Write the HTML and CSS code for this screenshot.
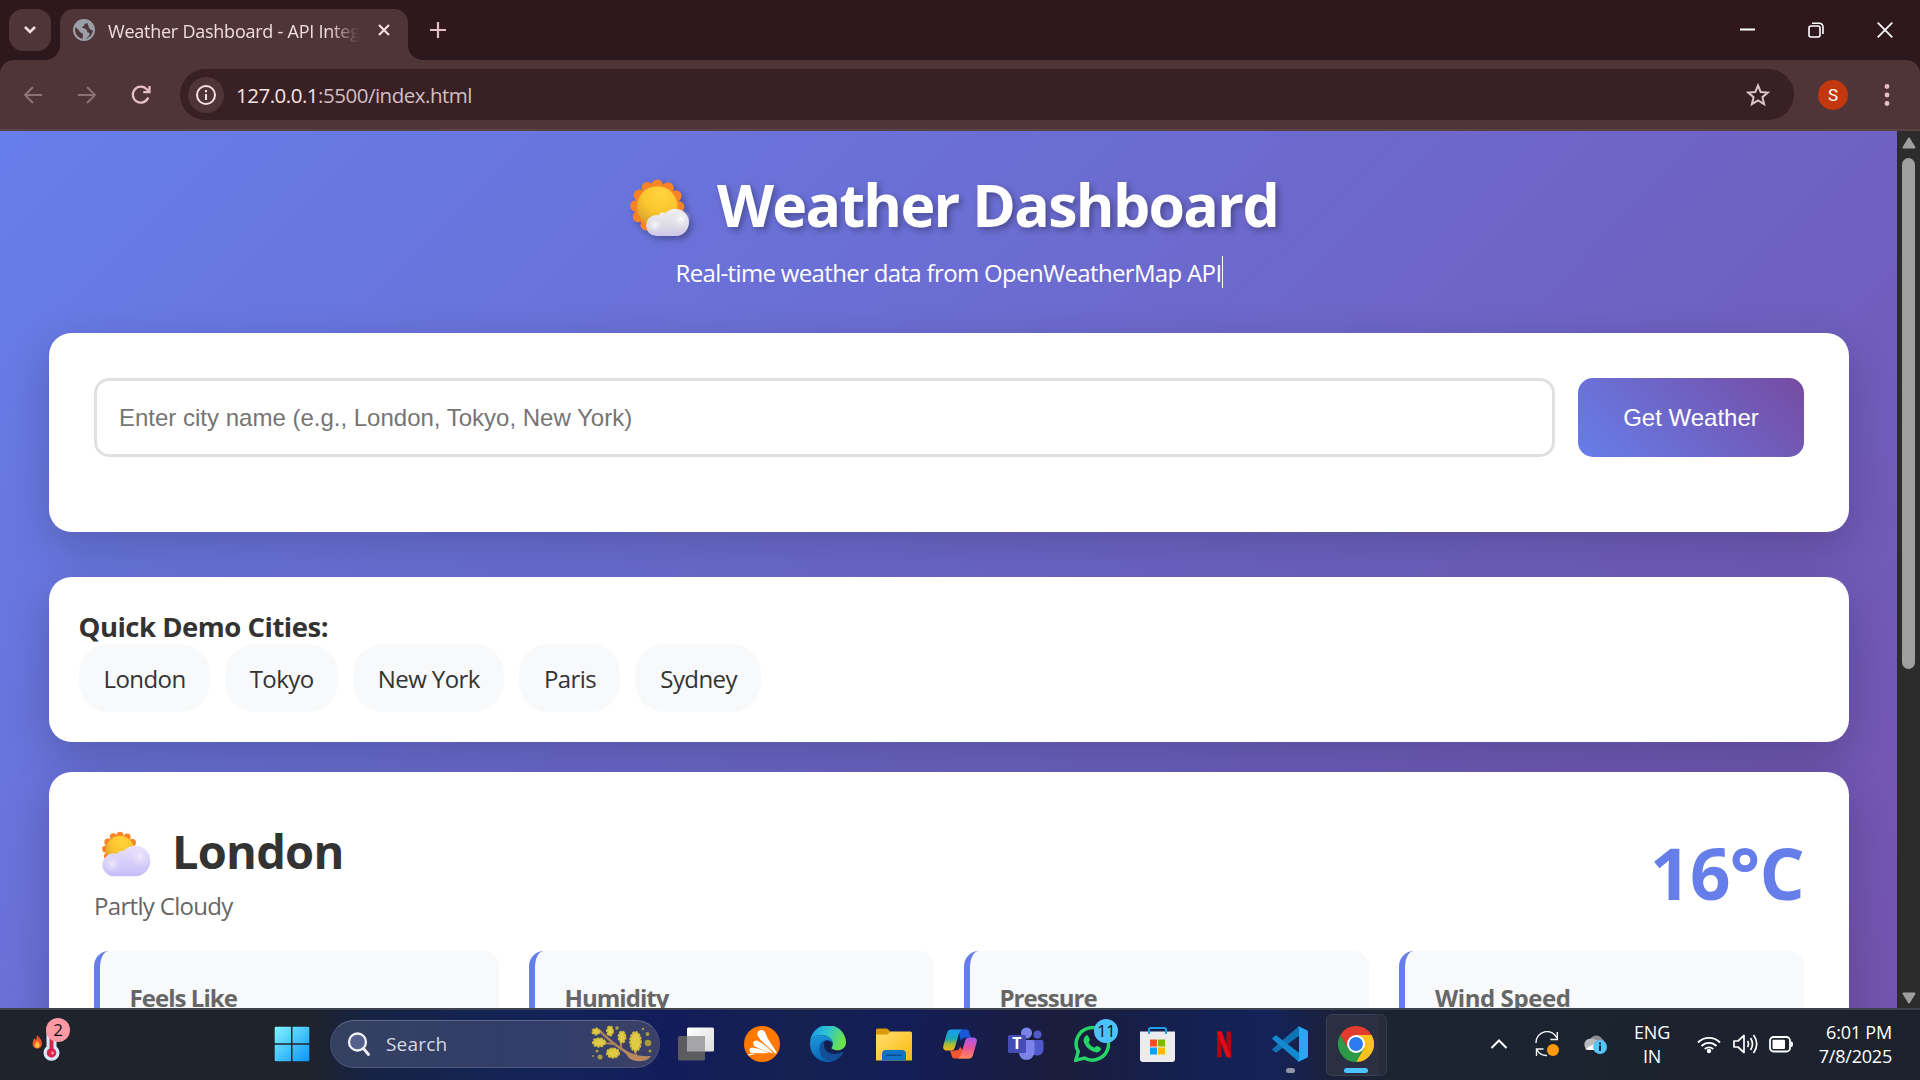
FILE: index.html
```html
<!DOCTYPE html>
<html lang="en">
<head>
<meta charset="utf-8">
<title>Weather Dashboard - API Integration</title>
<link rel="stylesheet" href="styles.css">
</head>
<body>
<div class="screen">
  <div class="tabstrip">
    <div class="tab-search">
      <svg width="14" height="10" viewBox="0 0 14 10"><path d="M2 2l5 5 5-5" fill="none" stroke="#f4dfe2" stroke-width="2.6"/></svg>
    </div>
    <div class="tab">
      <svg class="globe" width="22" height="22" viewBox="0 0 22 22"><circle cx="11" cy="11" r="10" fill="#50363b" stroke="#9aa0a6" stroke-width="2"/><path d="M2 8C4 4 7 1 11 1c2 0 4 .5 5 1.500-1 2-2 2-3.500 2-1 0-1 2-2 2.500-1.500.5-1.500 1.500-.5 2 2 .5 4 1 4 3 0 2 2 1 2.500 2.500.5 1.500-1.500 4-5.500 6.500-2-1-1-3.500-1-5 0-2-2.500-2-3.500-3.500C6 11 5 10 2 8z" fill="#9aa0a6"/><path d="M15 3c3 1 5 4 5.500 8-2 .5-4-.5-4.500-2.500C15 6 14 5 15 3z" fill="#9aa0a6"/></svg>
      <span class="tab-title">Weather Dashboard - API Integration</span>
      <svg width="12" height="12" viewBox="0 0 12 12"><path d="M1 1l10 10M11 1L1 11" stroke="#f4dfe2" stroke-width="2.200"/></svg>
    </div>
    <svg class="new-tab" width="16" height="16" viewBox="0 0 16 16"><path d="M8 0v16M0 8h16" stroke="#e6bfc6" stroke-width="2.200"/></svg>
    <div class="window-controls">
      <svg width="15" height="16" viewBox="0 0 15 16"><path d="M0 7.500h15" stroke="#fff" stroke-width="2"/></svg>
      <svg width="16" height="16" viewBox="0 0 16 16"><g fill="none" stroke="#fff" stroke-width="1.600"><rect x="1" y="4" width="11" height="11" rx="2"/><path d="M4 1.300h7.500a3.500 3.500 0 0 1 3.500 3.500V12"/></g></svg>
      <svg width="16" height="16" viewBox="0 0 16 16"><path d="M.7.7l14.600 14.600M15.300.7L.7 15.300" stroke="#fff" stroke-width="1.700"/></svg>
    </div>
  </div>
  <div class="toolbar">
    <svg class="nav dim" width="20" height="18" viewBox="0 0 20 18"><path d="M19 9H2M10 1L2 9l8 8"/></svg>
    <svg class="nav dim" width="20" height="18" viewBox="0 0 20 18"><path d="M1 9h17M10 1l8 8-8 8"/></svg>
    <svg class="nav" width="20" height="20" viewBox="0 0 20 20"><path d="M17.300 12.500A8 8 0 1 1 16 4.500l2 2M18.500 1v6.200h-6.200"/></svg>
    <div class="omnibox">
      <span class="site-info"><svg width="22" height="22" viewBox="0 0 22 22"><circle cx="11" cy="11" r="9" fill="none" stroke="#f4dfe2" stroke-width="2"/><path d="M11 10v6M11 6v2.200" stroke="#f4dfe2" stroke-width="2"/></svg></span>
      <span class="url"><span class="host">127.0.0.1</span>:5500/index.html</span>
      <svg class="star" width="24" height="24" viewBox="0 0 24 24"><path d="M12 2.500l2.700 6.600 7.100.5-5.400 4.600 1.700 7L12 17.400l-6.100 3.800 1.700-7-5.400-4.600 7.100-.5z" fill="none" stroke="#dcc4c8" stroke-width="2"/></svg>
    </div>
    <div class="avatar">S</div>
    <svg class="kebab" width="6" height="24" viewBox="0 0 6 24"><g fill="#e6bfc6"><circle cx="3" cy="3.500" r="2.400"/><circle cx="3" cy="12" r="2.400"/><circle cx="3" cy="20.500" r="2.400"/></g></svg>
  </div>

  <div class="viewport">
    <main class="page">
      <h1 class="title">
        <svg width="102" height="80" viewBox="0 0 102 80">
          <defs>
            <radialGradient id="sun" cx=".6" cy=".2" r=".9"><stop offset="0" stop-color="#ffd43d"/><stop offset=".5" stop-color="#fbc52e"/><stop offset="1" stop-color="#cf9a2c"/></radialGradient>
            <linearGradient id="cloud" x1="0" y1="0" x2="0" y2="1"><stop offset="0" stop-color="#f1f0f4"/><stop offset=".6" stop-color="#dddbe4"/><stop offset="1" stop-color="#cfc6e8"/></linearGradient>
            <radialGradient id="puff"><stop offset="0" stop-color="#fbfafc"/><stop offset="1" stop-color="#e4e2ea" stop-opacity="0"/></radialGradient>
          </defs>
          <circle cx="42.300" cy="43.500" r="20.500" fill="#f58a2b"/>
          <circle cx="42.300" cy="43.500" r="21.300" fill="none" stroke="#fa8325" stroke-width="11.500" stroke-linecap="round" stroke-dasharray="0 11.153" transform="rotate(-90 42.300 43.500)"/>
          <circle cx="42.300" cy="43.500" r="20.300" fill="url(#sun)"/>
          <path d="M41.500 73a10.500 10.500 0 0 1 0-21q1 0 2 .2a5.500 5.500 0 0 1 7-2.200A13.700 13.700 0 1 1 63 73z" fill="url(#cloud)"/>
          <circle cx="40" cy="62" r="8" fill="url(#puff)"/><circle cx="66" cy="56" r="10" fill="url(#puff)"/>
        </svg><span>Weather Dashboard</span>
      </h1>
      <p class="subtitle">Real-time weather data from OpenWeatherMap API</p>

      <section class="card search-card">
        <div class="city-input">Enter city name (e.g., London, Tokyo, New York)</div>
        <div class="get-weather">Get Weather</div>
      </section>

      <section class="card cities-card">
        <h3 class="cities-title">Quick Demo Cities:</h3>
        <div class="chips">
          <span class="chip">London</span><span class="chip">Tokyo</span><span class="chip">New York</span><span class="chip">Paris</span><span class="chip">Sydney</span>
        </div>
      </section>

      <section class="card weather-card">
        <div class="weather-head">
          <div>
            <h2 class="city">
              <svg width="78" height="68" viewBox="0 0 78 68">
                <defs><linearGradient id="cloud2" x1="0" y1="0" x2="0" y2="1"><stop offset="0" stop-color="#e9e2fb"/><stop offset="1" stop-color="#c6bdf8"/></linearGradient>
                <radialGradient id="puff2"><stop offset="0" stop-color="#f0eafd"/><stop offset="1" stop-color="#e0d8fc" stop-opacity="0"/></radialGradient></defs>
                <circle cx="26" cy="32.500" r="14" fill="#f58a2b"/>
                <circle cx="26" cy="32.500" r="14.300" fill="none" stroke="#fa8325" stroke-width="7" stroke-linecap="round" stroke-dasharray="0 7.487" transform="rotate(-90 26 32.500)"/>
                <circle cx="26" cy="32.500" r="13.800" fill="url(#sun)"/>
                <path d="M20 59.300a11.500 11.500 0 0 1 0-23q1.500 0 3 .5a6 6 0 0 1 6.500-2.800A15.300 15.300 0 1 1 41 59.300z" fill="url(#cloud2)"/>
                <circle cx="18" cy="47" r="9" fill="url(#puff2)"/><circle cx="46" cy="40" r="11" fill="url(#puff2)"/>
              </svg><span>London</span>
            </h2>
            <p class="condition">Partly Cloudy</p>
          </div>
          <div class="temperature">16°C</div>
        </div>
        <div class="details">
          <div class="detail">Feels Like</div>
          <div class="detail">Humidity</div>
          <div class="detail">Pressure</div>
          <div class="detail wind">Wind Speed</div>
        </div>
      </section>
    </main>
    <div class="scrollbar">
      <svg width="14" height="12" viewBox="0 0 14 12"><path d="M7 1.500L12.500 10.500h-11z" fill="#9f9f9f" stroke="#9f9f9f" stroke-width="2" stroke-linejoin="round"/></svg>
      <div class="thumb"></div>
      <svg class="down" width="14" height="12" viewBox="0 0 14 12"><path d="M7 10.500L12.500 1.500h-11z" fill="#9f9f9f" stroke="#9f9f9f" stroke-width="2" stroke-linejoin="round"/></svg>
    </div>
  </div>

  <div class="taskbar">
    <div class="widget">
      <svg width="30" height="36" viewBox="0 0 30 36"><path d="M5 9c3 3 5 5.500 5 9a4.700 4.700 0 0 1-9.400 0c0-3 1-4 1.700-6 .7 1 1.200 1.500 1.700 2C5 12 4.500 11 5 9z" fill="#f4582a"/><path d="M5 15c1.800 1.500 2.600 3 2.600 4.500a2.400 2.400 0 0 1-4.800 0C2.800 17.500 4.500 17 5 15z" fill="#ffc13d"/><path d="M14.500 6a5 5 0 0 1 10 0v14.500a8 8 0 1 1-10 0z" fill="#d9e9fb"/><path d="M17.500 9h4v13.500a4.800 4.800 0 1 1-4 0z" fill="#d8264c"/><circle cx="20.500" cy="27" r="1.500" fill="#ff8fa3"/></svg>
      <span class="badge pink">2</span>
    </div>
    <svg class="start" width="36" height="36" viewBox="0 0 36 36"><defs><linearGradient id="win" x1="0" y1="0" x2="1" y2="1"><stop offset="0" stop-color="#82f3ff"/><stop offset="1" stop-color="#0a95f9"/></linearGradient></defs><path d="M2 .7h15v16.600H.700V2Q.700.700 2 .7zM18.500.7H34q1.300 0 1.300 1.300v15.300H18.500zM.7 18.700H17v16.600H2Q.700 35.300.700 34zM18.500 18.700h16.800V34q0 1.300-1.300 1.300H18.500z" fill="url(#win)"/></svg>
    <div class="search">
      <svg width="24" height="24" viewBox="0 0 24 24"><circle cx="10.500" cy="10" r="8.500" fill="#55618a" stroke="#f0f1f5" stroke-width="2.300"/><path d="M16.500 16.500l5 6" stroke="#f0f1f5" stroke-width="2.800" stroke-linecap="round"/></svg>
      <span>Search</span>
      <svg class="twig" width="64" height="38" viewBox="0 0 64 38">
        <g fill="none" stroke="#b08259" stroke-linecap="round"><path d="M9 6C16 14 30 24 42 32" stroke-width="2.600"/><path d="M13 18l10 1M30 15v8M44 24l1 8" stroke-width="2"/></g>
        <path d="M30 22c8 6 16 10 30 9-4 6-15 7-22 2z" fill="#b9895d"/>
        <g fill="#dfcb45" stroke="#d3bd3d" stroke-width="2.200" stroke-dasharray="2.500 1"><ellipse cx="5" cy="6.500" rx="3.500" ry="2.800"/><ellipse cx="19" cy="6" rx="2.800" ry="4.500"/><ellipse cx="8" cy="17.500" rx="6" ry="4"/><ellipse cx="31" cy="12" rx="3.300" ry="5.500"/><ellipse cx="44.500" cy="16.500" rx="5.200" ry="9.500"/><ellipse cx="22" cy="28" rx="6" ry="4.500"/></g>
        <g fill="#a99c3f"><circle cx="26" cy="3" r="1.800"/><circle cx="56.500" cy="9" r="2"/><circle cx="57" cy="18" r="3.300"/><circle cx="59" cy="26" r="1.500"/><circle cx="6" cy="26" r="1.500"/><circle cx="9" cy="32" r="2.500"/><circle cx="2" cy="31" r="1"/><circle cx="52" cy="4" r="1.200"/></g>
      </svg>
    </div>
    <div class="apps">
      <svg width="36" height="36" viewBox="0 0 36 36"><defs><linearGradient id="tv" x1="0" y1="0" x2="1" y2="1"><stop offset="0" stop-color="#fff"/><stop offset="1" stop-color="#dcdcdc"/></linearGradient></defs><rect x="9" y="1.500" width="27" height="24" rx="1.500" fill="url(#tv)"/><rect y="10" width="27" height="24.500" rx="1.500" fill="#5c5c5e"/><path d="M9 10h18v15.500H9z" fill="#a5a5a8"/></svg>
      <svg width="36" height="36" viewBox="0 0 36 36"><circle cx="18" cy="18" r="18" fill="#ff7800"/><g fill="#fff"><path d="M13.500 9.500C12 5.500 17.500 2 20.500 5.500c1 1 2 4 3 6.500l9 14q.5 2-1.500 1.500C27 23 17 16 13.500 9.500z"/><path d="M9 17.500c0-2.500 3-3.500 5-2.500 6 3 11 8 15.500 12.500q-11-3-17.500-6.500c-1.500-.7-3-2-3-3.500z"/><path d="M5.500 24.500c-.5-2 1.500-3 3-3 5.500.5 11 3 16.500 5.500q-9 .5-16.500.2c-1.500 0-2.700-1-3-2.700z"/><path d="M4 29.500c0-2 3-2 7-1.300Q7 29 4 29.500z"/></g></svg>
      <svg width="36" height="36" viewBox="0 0 36 36"><defs><linearGradient id="eg" x1="0" y1="0" x2="1" y2=".3"><stop offset="0" stop-color="#1793e0"/><stop offset=".5" stop-color="#2cc3d5"/><stop offset="1" stop-color="#6be34e"/></linearGradient><linearGradient id="eb" x1="0" y1="0" x2=".4" y2="1"><stop offset="0" stop-color="#1b9de2"/><stop offset="1" stop-color="#0a64b5"/></linearGradient></defs><path d="M0 18a18 18 0 0 1 36-2c.2 5-3.500 8.300-8.500 8.300-3 0-6-1.300-6-2.300s1.500-1.500 1.300-4.500C22.500 12 16 9 11 9 4.500 9 0 13 0 18z" fill="url(#eg)"/><path d="M0 18C0 13 4.500 9 11 9c6 0 11.500 3 11.800 8.500-2-3-5-3.500-7-3-5.500 1.500-7 8-4 13 2.500 4.500 7 7.500 12 7.500a18 18 0 0 1-7 .9C7 35.300 0 27.500 0 18z" fill="url(#eb)"/><path d="M15.800 14.500c-1.300 1-1.800 2.500-1.800 4.500 0 5 4.500 9 10.500 9 3.500 0 6-.8 8-2 .8-.3 1.300.3.800 1A18 18 0 0 1 23 35.300C14 36 9 28.500 9.500 22c.3-4 2.500-7 6.300-7.500z" fill="#124f98"/></svg>
      <svg width="36" height="36" viewBox="0 0 36 36"><defs><linearGradient id="fo" x1="0" y1="0" x2="1" y2="1"><stop offset="0" stop-color="#ffdf70"/><stop offset="1" stop-color="#f9b90d"/></linearGradient></defs><path d="M0 4q0-1.500 1.500-1.500h9.500l4 3.500v5H0z" fill="#dd9a08"/><path d="M0 8.500h11l4-3h19.500Q36 5.500 36 7v27.500H0z" fill="url(#fo)"/><path d="M6 34.500V28q0-4 4-4h16q4 0 4 4v6.500z" fill="#1173c7"/><path d="M11 29.300h14" stroke="#0b4d8c" stroke-width="1.600" stroke-linecap="round"/></svg>
      <svg width="36" height="36" viewBox="0 0 36 36"><defs><linearGradient id="c1" x1="0" y1="0" x2="0" y2="1"><stop offset="0" stop-color="#1a9df0"/><stop offset=".45" stop-color="#1aa7b7"/><stop offset=".7" stop-color="#a6bf33"/><stop offset="1" stop-color="#f7b51e"/></linearGradient><linearGradient id="c2" x1="0" y1="0" x2="0" y2="1"><stop offset="0" stop-color="#a55af0"/><stop offset=".5" stop-color="#e8559b"/><stop offset="1" stop-color="#ff8a5c"/></linearGradient></defs><path d="M9 3.500h15c2.500 0 3 1.500 3.700 4l1.300 4h-5c-3 0-4.200 1-5 4L16.500 3.500z" fill="#1759d6"/><path d="M27 32.500H13c-2.500 0-3-1.500-3.700-4L8 24.500h5c3 0 4.200-1 5-4z" fill="#f2562f"/><path d="M9 3.500h11c-2 1-2.800 3-3.500 5.500l-3.500 12c-.8 2.500-1.800 3.500-4.500 3.500H5c-3 0-4.500-2-3.600-5L5 7c.7-2.500 2-3.500 4-3.500z" fill="url(#c1)"/><path d="M27 32.500H16c2-1 2.800-3 3.500-5.500l3.500-12c.8-2.500 1.800-3.500 4.500-3.500H31c3 0 4.500 2 3.600 5L31 29c-.7 2.500-2 3.500-4 3.500z" fill="url(#c2)"/></svg>
      <svg width="36" height="36" viewBox="0 0 36 36"><circle cx="29.500" cy="8.500" r="4" fill="#5059c9"/><path d="M24 14h10q1.500 0 1.500 1.500V23c0 4-3 6.500-6.500 6.500-3 0-5-2-5-4z" fill="#5059c9"/><circle cx="18.500" cy="7" r="5.500" fill="#7b83eb"/><path d="M11 14h13.500q2 0 2 2v9c0 5-3.500 9-8 9s-7.500-3.500-7.500-8z" fill="#7b83eb"/><rect y="9" width="18" height="18" rx="1.500" fill="#454db5"/><text x="9" y="23" text-anchor="middle" class="teams-t">T</text></svg>
      <div class="app"><svg width="36" height="36" viewBox="0 0 36 36"><path d="M1.800 34.200l2.400-8.500A16.200 16.200 0 1 1 10.500 32z" fill="none" stroke="#25d366" stroke-width="3.500"/><path d="M11.500 10c1-1 2.500-.8 3 .5l1.300 3c.3.800-.3 1.700-1.300 2.800 1.300 2.700 3.300 4.500 6 5.500 1-1.200 1.800-2.200 2.700-1.800l3 1.500c1 .5.900 1.500.4 2.500-1 2-3.200 2.800-5.100 2.300C15 24.700 11 20 9.700 15.500c-.5-2 .3-4.200 1.800-5.500z" fill="#25d366"/></svg><span class="badge blue">11</span></div>
      <svg width="36" height="36" viewBox="0 0 36 36"><path d="M0 5.500h35V33q0 3-3 3H3q-3 0-3-3z" fill="#ececee"/><path d="M9 8V3.500Q9 2 10.500 2h14Q26 2 26 3.500V8" fill="none" stroke="#1d9fe3" stroke-width="2"/><path d="M10 13.500h7v7h-7z" fill="#f25022"/><path d="M18 13.500h7v7h-7z" fill="#7fba00"/><path d="M10 21.500h7v7h-7z" fill="#00a4ef"/><path d="M18 21.500h7v7h-7z" fill="#ffb900"/></svg>
      <svg width="36" height="36" viewBox="0 0 36 36"><path d="M11 5.500h4.500V31l-4.500.5zM20.500 5.500H25v26l-4.500-.5z" fill="#b1060f"/><path d="M11 5.500h4.700L25 31.500l-4.700-.5z" fill="#e50914"/></svg>
      <div class="app"><svg width="36" height="36" viewBox="0 0 36 36"><path d="M1 24.500l3 2.300 23-17V0L.8 22.500q-1 1 .2 2z" fill="#0f72b4"/><path d="M1 11.500l3-2.300 23 17.500V36L.8 13.500q-1-1 .2-2z" fill="#1389d0"/><path d="M26 0l8.500 4Q36 4.700 36 6v24q0 1.300-1.500 2L26 36q1-1 1-3V3q0-2-1-3z" fill="#2aa6f2"/></svg><span class="dot"></span></div>
      <div class="app active"><svg width="36" height="36" viewBox="0 0 36 36"><path d="M18 18V9h15.600A18 18 0 0 1 18 36l7.800-13.500z" fill="#fcc31e"/><path d="M2.400 9l7.800 13.500 15.600 0L18 36A18 18 0 0 1 2.400 9z" fill="#2c9a47"/><path d="M2.400 9A18 18 0 0 1 33.600 9H18l-7.800 13.500z" fill="#e33b2e"/><circle cx="18" cy="18" r="9" fill="#fff"/><circle cx="18" cy="18" r="7" fill="#2d7af1"/></svg><span class="bar"></span></div>
    </div>
    <div class="tray">
      <svg class="up" width="18" height="12" viewBox="0 0 18 12"><path d="M1.500 10L9 2.500l7.500 7.500" fill="none" stroke="#fff" stroke-width="2"/></svg>
      <svg class="sync" width="26" height="26" viewBox="0 0 26 26"><g fill="none" stroke="#f4f4f4" stroke-width="1.400"><path d="M2 12A11 11 0 0 1 23 7M23.300 1v7.500h-7"/><path d="M2.500 25v-7h7M3 19a11 11 0 0 0 10 5.500"/></g><circle cx="19" cy="19" r="6" fill="#ff9a0a"/></svg>
      <svg class="cloud" width="26" height="22" viewBox="0 0 26 22"><path d="M8 7a6.500 6.500 0 0 1 12-1c3 1 3 5 1 7L8 12z" fill="#8b8d91"/><path d="M6 17A6 6 0 0 1 6 6c5-1.500 8 0 10 3v8z" fill="#b9babd"/><path d="M3 16l9-5 5 6H6z" fill="#fff"/><circle cx="18" cy="14" r="7" fill="#56c5fa"/><path d="M18 12.500V18M18 9.500v2" stroke="#0b2a40" stroke-width="2"/></svg>
      <div class="lang">ENG<br>IN</div>
      <svg class="wifi" width="24" height="19" viewBox="0 0 24 19"><g fill="none" stroke="#fff" stroke-width="1.800"><path d="M1 7.500a15.500 15.500 0 0 1 22 0M4.500 11a10.600 10.600 0 0 1 15 0M7.800 14a6 6 0 0 1 8.400 0"/></g><circle cx="12" cy="16" r="2.200" fill="#fff"/></svg>
      <svg class="volume" width="25" height="20" viewBox="0 0 25 20"><g fill="none" stroke="#fff" stroke-width="1.700" stroke-linejoin="round"><path d="M1 7h4l6-5.500v17L5 13H1zM14.500 7q2 3 0 6M17.500 4q4 6 0 12M20.500 1q6.500 9 0 18"/></g></svg>
      <svg class="battery" width="25" height="17" viewBox="0 0 25 17"><rect x="1" y="1" width="20" height="14.500" rx="3.500" fill="none" stroke="#fff" stroke-width="1.800"/><rect x="3.500" y="3.700" width="12.500" height="9.200" rx="1" fill="#fff"/><path d="M22 5.500q2 0 2 2.800t-2 2.800z" fill="#fff"/></svg>
      <div class="clock">6:01 PM<br>7/8/2025</div>
    </div>
  </div>
</div>
</body>
</html>
```

FILE: styles.css
```css
* { box-sizing: border-box; }
body { margin: 0; background: #2e181d; font-family: "Open Sans", "Noto Sans", sans-serif; }
h1, h2, h3, p { margin: 0; }
svg { display: block; flex: none; }
.screen { width: 1920px; height: 1080px; overflow: hidden; display: flex; flex-direction: column; }

/* tab strip */
.tabstrip { height: 60px; flex: none; display: flex; padding: 9px 27px 0 9px; background: #2e181d; }
.tab-search { width: 42px; height: 42px; border-radius: 14px; background: #4f3438; display: flex; align-items: center; justify-content: center; }
.tab { position: relative; width: 348px; height: 51px; margin-left: 9px; padding: 0 18px 0 13px; border-radius: 14px 14px 0 0; background: #4f3438; display: flex; align-items: center; }
.tab::before, .tab::after { content: ""; position: absolute; bottom: 0; width: 15px; height: 15px; }
.tab::before { left: -15px; background: radial-gradient(circle at 0 0, transparent 14.5px, #4f3438 15.500px); }
.tab::after { right: -15px; background: radial-gradient(circle at 100% 0, transparent 14.5px, #4f3438 15.500px); }
.tab > svg { margin-bottom: 9px; }
.tab-title { width: 251px; margin: 0 19px 7px 13px; font-size: 18px; line-height: 30px; letter-spacing: -.24px; white-space: nowrap; overflow: hidden; color: #f0dde0; -webkit-mask-image: linear-gradient(90deg, #000 88%, transparent 100%); mask-image: linear-gradient(90deg, #000 88%, transparent 100%); }
.new-tab { margin: 13px 0 0 22px; }
.window-controls { margin: 13px 0 0 auto; display: flex; gap: 53px; }

/* toolbar */
.toolbar { height: 71px; flex: none; display: flex; align-items: center; padding: 0 29px 0 23px; border-bottom: 2px solid #5a4346; border-radius: 14px 14px 0 0; background: #4f3438; }
.nav { margin-right: 34px; fill: none; stroke: #e6bfc6; stroke-width: 2.3; }
.nav.dim { stroke: #8d7175; stroke-width: 2; }
.omnibox { width: 1614px; height: 51px; margin-left: -5px; padding: 0 24px 0 8px; border-radius: 26px; background: #382024; display: flex; align-items: center; }
.site-info { width: 36px; height: 36px; border-radius: 50%; background: #4f3438; display: flex; align-items: center; justify-content: center; }
.url { margin-left: 12px; font-size: 20.5px; line-height: 30px; letter-spacing: -.49px; color: #d3bfc2; }
.host { color: #f6e4e7; }
.star { margin-left: auto; }
.avatar { width: 30px; height: 30px; margin-left: 24px; border-radius: 50%; background: #c2370e; color: #fff; font: 17px/30px Roboto, sans-serif; text-align: center; }
.kebab { margin-left: 36px; }

/* page viewport */
.viewport { height: 877px; flex: none; display: flex; overflow: hidden; }
.page { width: 1897px; height: 1424px; padding: 32px 48px 0 49px; background: linear-gradient(135deg, #667eea 0%, #764ba2 100%); }
.scrollbar { width: 23px; padding: 6px 4px 3px 5px; background: #2c2c2c; display: flex; flex-direction: column; }
.thumb { width: 13px; height: 511px; margin-top: 9px; border-radius: 7px; background: #9f9f9f; }
.scrollbar .down { margin-top: auto; margin-bottom: 1px; }

.title { display: flex; justify-content: center; height: 80px; padding-right: 5px; font-size: 59px; line-height: 82px; font-weight: 700; letter-spacing: -1.7px; color: #fff; white-space: nowrap; text-shadow: 3px 3px 6px rgba(0, 0, 0, .3); }
.title svg { overflow: visible; filter: drop-shadow(3px 3px 3px rgba(0, 0, 0, .3)); }
.subtitle { width: 547px; height: 32px; margin: 13px auto 45px; border-right: 1.5px solid #fff; font-size: 24px; line-height: 34px; letter-spacing: -.66px; color: #fff; white-space: nowrap; }
.card { border-radius: 22.5px; background: #fff; box-shadow: 0 15px 45px rgba(0, 0, 0, .2); }
.search-card { height: 199px; margin-bottom: 45px; padding: 45px; display: flex; gap: 23px; }
.city-input { flex: 1; height: 79px; padding: 0 22px; border: 3px solid #e0e0e0; border-radius: 15px; font: 24px/73px "Liberation Sans", sans-serif; color: #757575; }
.get-weather { width: 226px; height: 79px; border-radius: 15px; background: linear-gradient(45deg, #667eea, #764ba2); font: 24px/79px "Liberation Sans", sans-serif; color: #fff; text-align: center; }

.cities-card { height: 165px; margin-bottom: 30px; padding: 31px 29.5px 0; color: #333; }
.cities-title { height: 36px; font-size: 27.5px; line-height: 38px; letter-spacing: -.5px; }
.chips { display: flex; gap: 15px; }
.chip { height: 68px; padding: 0 24.2px 0 25px; border-radius: 30px; background: #f8f9fa; font-size: 24px; line-height: 70px; letter-spacing: -.58px; }

.weather-card { padding: 45px 45px 0; height: 500px; }
.weather-head { display: flex; justify-content: space-between; align-items: center; height: 110px; }
.city { display: flex; font-size: 47px; line-height: 68px; letter-spacing: -.8px; color: #333; }
.condition { font-size: 24px; line-height: 42px; letter-spacing: -.68px; color: #666; }
.temperature { padding-top: 2px; font-size: 71px; line-height: 100px; font-weight: 700; letter-spacing: -.71px; color: #667eea; }
.details { display: grid; grid-template-columns: repeat(4, 1fr); gap: 30px; margin-top: 24px; }
.detail { height: 160px; padding: 30px 29.5px; border-left: 6px solid #667eea; border-radius: 15px; background: #f8f9fa; font-size: 24px; line-height: 33px; font-weight: 700; letter-spacing: -.95px; color: #666; }
.detail.wind { padding-left: 30px; letter-spacing: -.42px; }

/* taskbar */
.taskbar { height: 72px; flex: none; display: flex; align-items: center; padding: 0 28px 2px 32px; border-top: 2px solid #3d434e; background: linear-gradient(90deg, #1e232c 0, #1e232c 310px, #162345 370px, #13235a 560px, #131c5a 670px, #142150 800px, #131d58 900px, #1b1d3b 1060px, #14204f 1180px, #14225a 1270px, #1b2136 1340px, #1c2431 1400px, #1c222d 100%); color: #fff; }
.widget { position: relative; width: 30px; height: 36px; }
.badge { position: absolute; width: 24px; height: 24px; border-radius: 50%; font-size: 17px; line-height: 24px; text-align: center; color: #111; }
.badge.pink { left: 14px; top: -8px; background: #ff99a4; }
.badge.blue { left: 20px; top: -7px; background: #4cc2ff; letter-spacing: -.8px; }
.start { margin-left: 212px; }
.search { width: 330px; height: 48px; margin-left: 20px; padding: 0 4px 0 16px; border: 1.5px solid #56608a; border-color: #5f6788 #444d75 #4d5678; border-radius: 24px; background: linear-gradient(90deg, #35415f, #313d6b 60%, #3b4168); display: flex; align-items: center; }
.search span { margin-left: 15px; font-size: 19px; line-height: 26px; letter-spacing: .2px; color: #d6d9e2; }
.twig { margin-left: auto; }
.apps { display: flex; gap: 30px; margin-left: 18px; }
.teams-t { font: 700 16px "Open Sans", sans-serif; fill: #fff; }
.app { position: relative; width: 36px; height: 36px; }
.dot, .bar { position: absolute; top: 42px; height: 5px; border-radius: 3px; }
.dot { left: 14px; width: 9px; background: #9297a8; }
.bar { left: 6px; width: 24px; background: #4cc2ff; }
.active::before { content: ""; position: absolute; left: -12px; top: -12px; width: 53px; height: 60px; border: 1px solid #3a4152; border-radius: 6px; background: #2a3042; }
.active::after { content: ""; position: absolute; left: 41px; top: -12px; width: 7px; height: 60px; border: 1px solid #353c4b; border-left: 0; border-radius: 0 6px 6px 0; background: #262c3a; }
.active svg { position: relative; }
.tray { display: flex; align-items: center; margin-left: auto; font-size: 18px; line-height: 24px; letter-spacing: -.2px; white-space: nowrap; }
.lang { width: 36px; margin: 0 27px 0 26px; text-align: center; }
.sync { margin: 0 22px 0 26px; }
.volume { margin: 0 11px 0 12px; }
.clock { width: 76px; margin-left: 22px; text-align: right; }
```
